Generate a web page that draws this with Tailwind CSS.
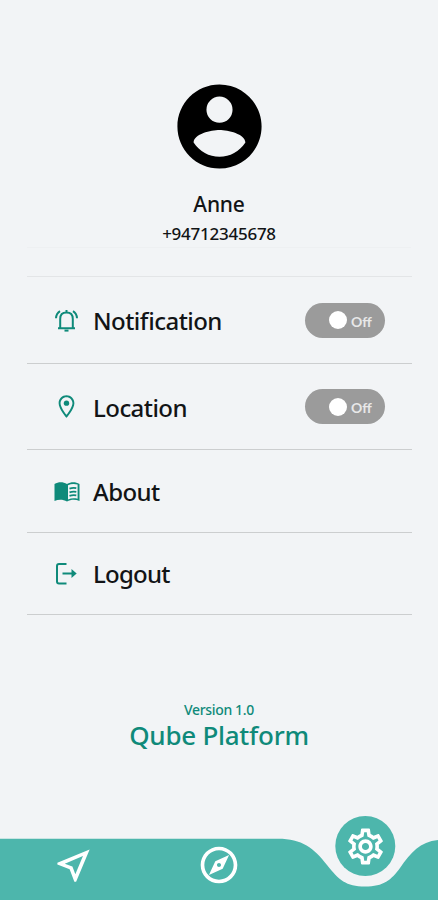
<!DOCTYPE html>
<html lang="en">
<head>
<meta charset="utf-8">
<meta name="viewport" content="width=device-width, initial-scale=1">
<title>Settings</title>
<script src="https://cdn.jsdelivr.net/npm/@tailwindcss/browser@4"></script>
</head>
<body class="bg-[#f2f4f6] font-['Noto_Sans',sans-serif] font-medium text-[#121416]">
<div class="flex h-[900px] w-[438px] flex-col overflow-hidden">
  <header class="mx-[27px] flex h-[248px] flex-col items-center border-b border-[#eef0f2] pt-[76px]">
    <svg class="size-[101px] shrink-0" viewBox="0 0 24 24"><path fill="#000" fill-rule="evenodd" d="M12 2C6.48 2 2 6.48 2 12s4.48 10 10 10 10-4.48 10-10S17.52 2 12 2zm0 2.9a3.1 3.1 0 1 1 0 6.2 3.1 3.1 0 0 1 0-6.2zm0 14.3c-2.5 0-4.71-1.28-6.15-3.4.03-1.99 4.15-2.95 6.15-2.95s6.12.96 6.15 2.95C16.71 17.92 14.5 19.2 12 19.2z"/></svg>
    <h1 class="mt-[12px] text-[21px] leading-[30px] tracking-[-0.2px]">Anne</h1>
    <p class="text-[17px] leading-[30px] tracking-[-0.25px]">+94712345678</p>
  </header>
  <main class="mr-[26px] ml-[27px] mt-[28px] border-t border-[#e3e5e7] text-[24px] tracking-[-0.55px]">
    <div class="flex h-[87px] items-center border-b border-[#cccecf] pr-[27px] pl-[26px]">
      <svg class="size-[27px]" viewBox="0 0 27 27" fill="none" stroke="#0f8a7a" stroke-width="2"><path d="M5 21.200h17M7.200 21.200v-9.200c0-4 2.500-6.400 6.300-6.400s6.300 2.400 6.300 6.400v9.200M13.500 3v2.500M3 11.200c.2-3 1.500-5.400 4-7M24 11.200c-.2-3-1.500-5.400-4-7"/><path stroke-width="2" d="M11.500 23.600h4"/></svg>
      <span class="ml-[13px] flex-1 pt-[2px] [font-feature-settings:'liga'_1]">Notification</span>
      <button class="flex h-[35px] w-[80px] items-center rounded-full bg-[#9b9b9b] pl-[24px] text-[#e8e8e8]"><span class="size-[18px] rounded-full bg-white"></span><span class="ml-[4px] pt-[2px] font-['Lato',sans-serif] text-[14px] font-bold tracking-normal">Off</span></button>
    </div>
    <div class="flex h-[86px] items-center border-b border-[#cccecf] pr-[27px] pl-[26px]">
      <svg class="size-[27px]" viewBox="0 0 24 24" fill="#0f8a7a"><path d="M12 2C8.130 2 5 5.130 5 9c0 5.250 7 13 7 13s7-7.750 7-13c0-3.870-3.130-7-7-7zM6.700 9c0-2.900 2.400-5.300 5.300-5.300s5.300 2.400 5.300 5.300c0 2.880-3.180 7.690-5.300 10.380C9.920 16.710 6.700 11.850 6.700 9z"/><circle cx="12" cy="9" r="2.400"/></svg>
      <span class="ml-[13px] flex-1 pt-[2px]">Location</span>
      <button class="flex h-[35px] w-[80px] items-center rounded-full bg-[#9b9b9b] pl-[24px] text-[#e8e8e8]"><span class="size-[18px] rounded-full bg-white"></span><span class="ml-[4px] pt-[2px] font-['Lato',sans-serif] text-[14px] font-bold tracking-normal">Off</span></button>
    </div>
    <div class="flex h-[83px] items-center border-b border-[#cccecf] pl-[26px]">
      <svg class="size-[27px]" viewBox="0 0 27 27"><path fill="#0f8a7a" d="M1.500 6C5.500 3.800 10 3.800 14 6c4-2.200 8.500-2.200 12.500 0v17c-4-1.600-8.500-1.600-12.500.5-4-2.100-8.500-2.100-12.500-.5z"/><path fill="#f2f4f6" d="M15 7.200c3-1.500 6.500-1.700 9.600-.6v14.200c-3.300-.8-6.600-.6-9.600.8z"/><path fill="none" stroke="#0f8a7a" stroke-width="1.800" d="M16.500 10.700c2.200-.8 4.500-.9 6.800-.5M16.500 14.300c2.200-.8 4.500-.9 6.800-.5M16.500 17.900c2.200-.8 4.500-.9 6.800-.5"/></svg>
      <span class="ml-[13px] pt-[2px]">About</span>
    </div>
    <div class="flex h-[82px] items-center border-b border-[#cccecf] pl-[26px]">
      <svg class="size-[27px]" viewBox="0 0 27 27" fill="none" stroke="#0f8a7a" stroke-width="2"><path d="M13.500 4H6a2 2 0 0 0-2 2v15.500a2 2 0 0 0 2 2h7.500M9.500 13.500h10"/><path fill="#0f8a7a" stroke="none" d="M18.500 9l5.200 4.500-5.200 4.500z"/></svg>
      <span class="ml-[13px] pt-[1px] tracking-[-0.75px]">Logout</span>
    </div>
  </main>
  <footer class="mt-[85px] flex flex-col items-center text-[#0f8a7a]">
    <p class="text-[14px] leading-[20px] tracking-[-0.35px]">Version 1.0</p>
    <p class="text-[26px] leading-[30px] tracking-[-0.27px]">Qube Platform</p>
  </footer>
  <nav class="relative mt-auto h-[84px]">
    <svg class="absolute inset-0" width="438" height="84" viewBox="0 0 438 84" fill="#4db6ac"><path d="M0 22.700H278C302 22.700 314 32 327 49C339 64 346 70.500 365 70.500C384 70.500 391 64 400 52C411 36 420 26 438 24V84H0z"/><circle cx="365.300" cy="30" r="30"/></svg>
    <svg class="absolute top-[27.500px] left-[51.500px] size-[43px]" viewBox="0 0 24 24" fill="#fff"><path d="M17.270 6.730l-4.240 10.130-1.320-3.420-.32-.83-.82-.32-3.430-1.330 10.130-4.230M21 3L3 10.530v.98l6.840 2.650L12.480 21h.98L21 3z"/></svg>
    <svg class="absolute top-[27px] left-[197.300px] size-[44px]" viewBox="0 0 24 24" fill="#fff"><path d="M12 2C6.480 2 2 6.480 2 12s4.480 10 10 10 10-4.480 10-10S17.520 2 12 2zm0 18c-4.410 0-8-3.590-8-8s3.590-8 8-8 8 3.590 8 8-3.590 8-8 8zm-5.500-2.500l7.510-3.490L17.500 6.500 9.990 9.990 6.500 17.500zm5.500-6.600c.61 0 1.100.49 1.100 1.100s-.49 1.100-1.100 1.100-1.100-.49-1.100-1.100.49-1.100 1.100-1.100z"/></svg>
    <svg class="absolute top-[8.500px] left-[343.800px] size-[43px]" viewBox="0 0 24 24" fill="#fff"><path d="M19.430 12.980c.04-.32.07-.64.07-.98s-.03-.66-.07-.98l2.110-1.650c.19-.15.24-.42.12-.64l-2-3.460c-.09-.16-.26-.25-.44-.25-.06 0-.12.010-.17.030l-2.490 1c-.52-.4-1.080-.73-1.690-.98l-.38-2.650C14.460 2.180 14.250 2 14 2h-4c-.25 0-.46.18-.49.42l-.38 2.650c-.61.25-1.170.59-1.690.98l-2.490-1c-.06-.02-.12-.03-.18-.03-.17 0-.34.09-.43.25l-2 3.460c-.13.22-.07.49.12.64l2.110 1.650c-.04.32-.07.65-.07.98s.03.66.07.98l-2.110 1.650c-.19.15-.24.42-.12.64l2 3.460c.09.16.26.25.44.25.06 0 .12-.01.17-.03l2.490-1c.52.4 1.080.73 1.690.98l.38 2.650c.03.24.24.42.49.42h4c.25 0 .46-.18.49-.42l.38-2.650c.61-.25 1.170-.59 1.690-.98l2.490 1c.06.02.12.03.18.03.17 0 .34-.09.43-.25l2-3.460c.12-.22.07-.49-.12-.64l-2.110-1.650zm-1.980-1.710c.04.31.05.52.05.73s-.02.43-.05.73l-.14 1.130.89.7 1.080.84-.7 1.210-1.270-.51-1.040-.42-.9.68c-.43.32-.84.56-1.250.73l-1.060.43-.16 1.130-.2 1.350h-1.400l-.19-1.350-.16-1.130-1.060-.43c-.43-.18-.83-.41-1.230-.71l-.91-.7-1.060.43-1.270.51-.7-1.210 1.080-.84.89-.7-.14-1.130c-.03-.31-.05-.54-.05-.74s.02-.43.05-.73l.14-1.130-.89-.7-1.080-.84.7-1.210 1.270.51 1.040.42.9-.68c.43-.32.84-.56 1.250-.73l1.060-.43.16-1.130.2-1.350h1.390l.19 1.350.16 1.130 1.060.43c.43.18.83.41 1.230.71l.91.7 1.060-.43 1.270-.51.7 1.210-1.070.85-.89.7.14 1.130zM12 8c-2.210 0-4 1.790-4 4s1.790 4 4 4 4-1.790 4-4-1.790-4-4-4zm0 6c-1.100 0-2-.9-2-2s.9-2 2-2 2 .9 2 2-.9 2-2 2z"/></svg>
  </nav>
</div>
</body>
</html>
